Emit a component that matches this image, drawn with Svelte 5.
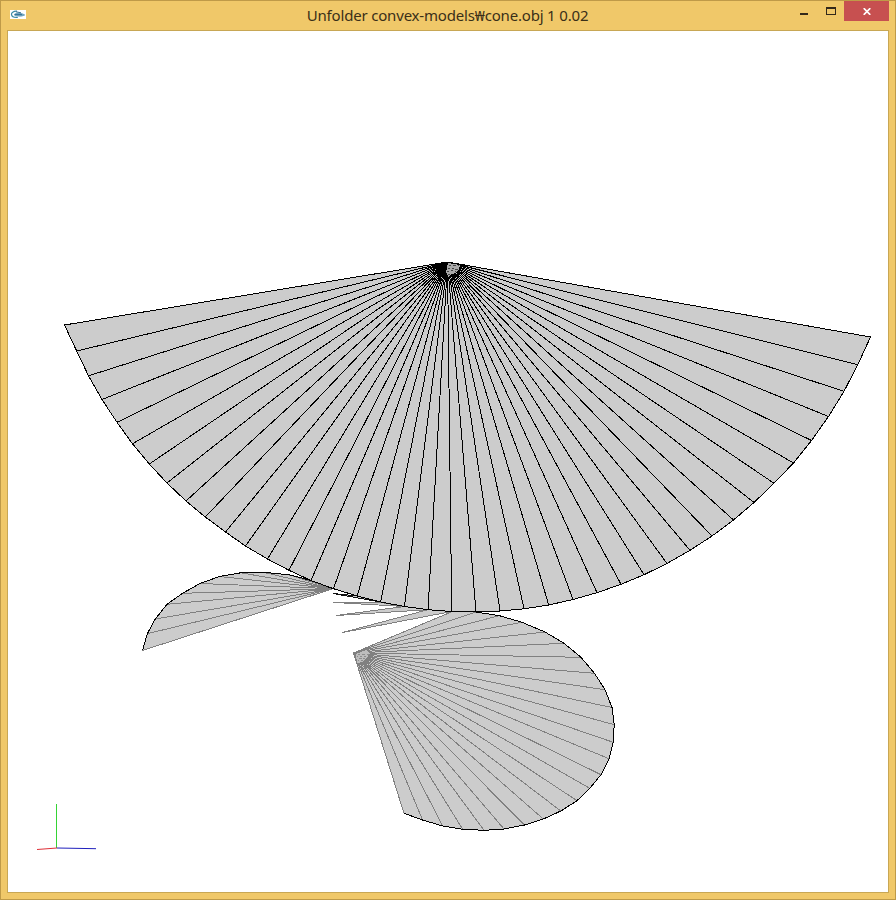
<script>
  const apex = [447.5, 262];
  const rim = [
    [64.5, 325], [76.7, 351], [88.5, 375.8], [102, 399.5], [117, 422.3], [132.5, 443.8], [149.3, 464],
    [167, 483], [186, 501], [205.3, 517], [225.5, 532], [245.5, 546], [267.5, 559], [289, 570.3],
    [311, 580.5], [333.5, 588.7], [357.3, 596], [380.7, 602], [404.5, 606.5], [428, 609.7], [451.7, 611.5],
    [476, 612], [500, 611], [524, 608.8], [548.7, 605], [573, 599.5], [597, 592.7], [621, 584.3],
    [644, 574.7], [667, 563.5], [690, 550.3], [712, 536], [733.5, 520], [754, 502.5], [774, 483.3],
    [793.5, 463], [811.5, 440.5], [828.5, 416.5], [844, 391.3], [857.8, 364.7], [870.5, 337]
  ];

  const baseApex = [353.5, 653];
  const base = [
    [451.7, 611.8], [476, 612], [499.5, 615.7], [522, 622.3], [545, 632], [564, 643.3], [581, 657.3],
    [594.5, 673.3], [605, 689.7], [612, 707.5], [614.2, 724.7], [613.2, 742.3], [609, 758.7], [601, 774.7],
    [589.8, 788.3], [577, 800.7], [560.8, 811], [543.3, 819], [524.5, 825], [504, 829], [484, 830.3],
    [462.7, 829.3], [442.7, 826], [422.5, 820], [404, 813.3]
  ];

  const wingApex = [333, 588.7];
  const wing = [
    [142.5, 650.5], [147.3, 633.7], [155.3, 619], [167, 604.3], [182.5, 593.3], [200, 583.5],
    [219.5, 576.5], [240.7, 572.8], [263.5, 572.3], [288.5, 574.7], [311.5, 580.5]
  ];

  const slivers = [
    { tip: [333, 602.4], a: [380.7, 602.4], b: [404.5, 606.5] },
    { tip: [336, 615.5], a: [404.5, 606.5], b: [428, 609.7] },
    { tip: [342.5, 632.5], a: [428, 609.7], b: [451.7, 611.5] }
  ];

  const pts = (list) => list.map((p) => p.join(',')).join(' ');
</script>

<div class="window">
  <header>
    <svg class="app-icon" width="16" height="9" viewBox="0 0 16 9">
      <rect width="16" height="9" fill="#fff" />
      <path d="M7 1.2C3.2 1 1.2 2.8 1.5 4.6c.3 1.8 3 3 6.3 2.7" fill="none" stroke="#3c8ba5" stroke-width="1.2" />
      <path d="M4 4.8C6 2.4 10.500 2.400 14.800 5 12 6.600 7 6.700 4 4.800Z" fill="#7fb0c8" stroke="#397da0" stroke-width=".5" />
      <path d="M5 4.600h7M6 1.800l5 1" stroke="#28678f" stroke-width=".9" />
    </svg>
    <h1>Unfolder convex-models₩cone.obj 1 0.02</h1>
    <div class="controls">
      <button class="min" aria-label="Minimize"><i></i></button>
      <button class="max" aria-label="Maximize"><i></i></button>
      <button class="close" aria-label="Close">
        <svg width="8" height="7" viewBox="0 0 8 7"><path d="M.7.2 7.3 6.8M7.3.2.7 6.8" stroke="#fff" stroke-width="1.7" /></svg>
      </button>
    </div>
  </header>
  <main>
    <svg width="880" height="861" viewBox="8 31 880 861" shape-rendering="crispEdges" fill="none" stroke-width="1">
      <polygon points={pts([wingApex, ...wing])} fill="#ccc" />
      {#each wing as p}
        <line x1={wingApex[0]} y1={wingApex[1]} x2={p[0]} y2={p[1]} stroke="#808080" />
      {/each}
      <polyline points={pts([...wing, wingApex])} stroke="#000" />

      {#each slivers as s}
        <polygon points={pts([s.tip, s.a, s.b])} fill="#ccc" stroke="#808080" />
      {/each}
      <path d="M333 593.5 357.3 596 380.7 602Z" fill="#ccc" stroke="#111" />

      <polygon points={pts([baseApex, ...base])} fill="#ccc" />
      {#each base as p}
        <line x1={baseApex[0]} y1={baseApex[1]} x2={p[0]} y2={p[1]} stroke="#808080" />
      {/each}
      <polyline points={pts(base.slice(1))} stroke="#000" />
      <path d="M356 654 366 650 370 653 367 658 362 662 357 663Z" fill="#bdbdbd" />
      <path d="M358 654h2m2 0h3m2 0h2M357 656h1m2 0h2m2 0h2M359 658h3m1 0h2M358 660h1m2 0h2" stroke="#8c8c8c" />

      <polygon points={pts([apex, ...rim])} fill="#ccc" />
      {#each rim as p}
        <line x1={apex[0]} y1={apex[1]} x2={p[0]} y2={p[1]} stroke="#000" />
      {/each}
      <polyline points={pts(rim)} stroke="#000" />
      <path d="M448 263 460 265 459 269 455 273 450 275 449 278 446 272Z" fill="#aaa" />
      <path d="M449 265.500h2m2 0h3m2 0h1M448 268.500h2m2 0h2m1 1h3M447 271.500h2m2-1h2m2 1h1M448 274.500h2" stroke="#444" />

      <g shape-rendering="auto">
        <path d="M56.5 804v44" stroke="#35d335" />
        <path d="M37 849.5 57 848" stroke="#df3038" />
        <path d="M57 848 96 848.7" stroke="#2020bd" />
      </g>
    </svg>
  </main>
</div>

<style>
  :global(body) {
    margin: 0;
  }
  .window {
    box-sizing: border-box;
    width: 896px;
    height: 900px;
    display: flex;
    flex-direction: column;
    padding: 0 6px 6px;
    background: #f0c869;
    border: 1px solid #bf9a48;
    font-family: 'Noto Sans', 'Noto Sans CJK KR', sans-serif;
  }
  header {
    height: 29px;
    display: flex;
    align-items: flex-start;
    flex: none;
  }
  .app-icon {
    margin: 9px 0 0 3px;
  }
  h1 {
    flex: 1;
    margin: 3px 0 0 79px;
    text-align: center;
    font-size: 15px;
    line-height: 22px;
    font-weight: 400;
    letter-spacing: -0.18px;
    color: #3a2f18;
    white-space: nowrap;
  }
  .controls {
    display: flex;
  }
  button {
    display: flex;
    justify-content: center;
    width: 27px;
    height: 20px;
    padding: 0;
    border: 0;
    background: none;
  }
  .min i {
    width: 8px;
    height: 2px;
    margin-top: 12px;
    background: #33291a;
  }
  .max i {
    box-sizing: border-box;
    width: 10px;
    height: 8px;
    margin-top: 6px;
    border: 1px solid #33291a;
    border-top-width: 2px;
  }
  .close {
    width: 45px;
    background: #c75050;
  }
  .close svg {
    margin-top: 7px;
  }
  main {
    width: 880px;
    height: 861px;
    border: 1px solid #c8a755;
    background: #fff;
  }
  main svg {
    display: block;
  }
</style>
